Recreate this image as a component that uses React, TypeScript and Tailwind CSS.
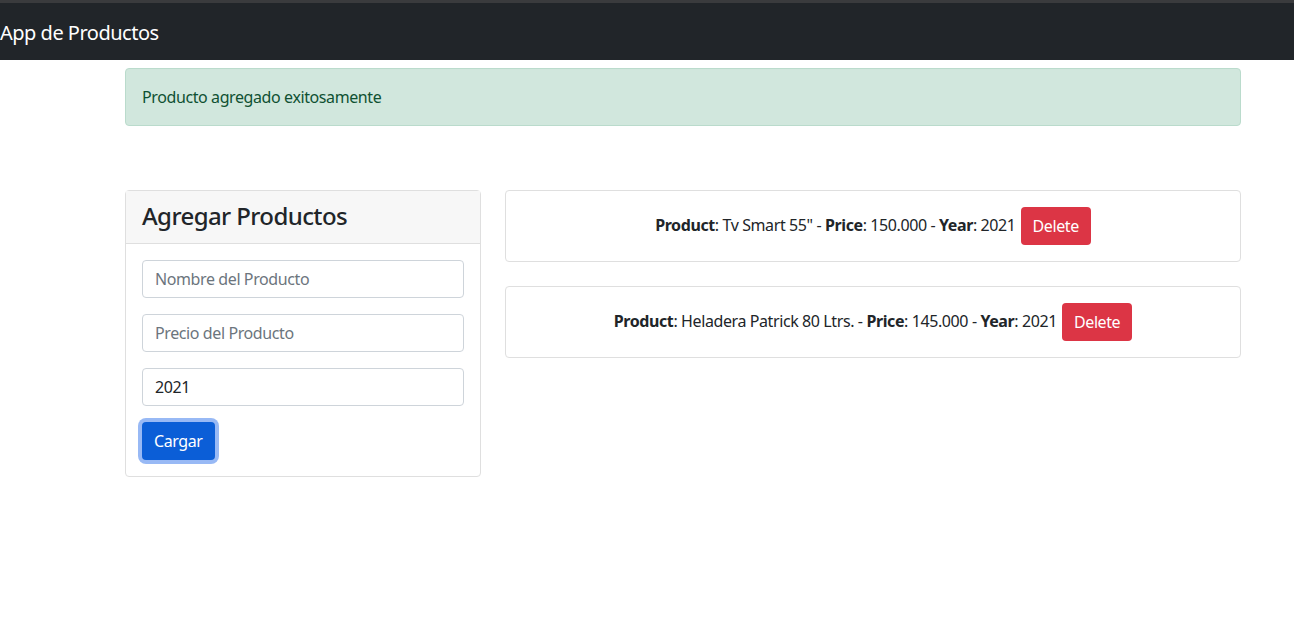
const products = [
  { name: 'Tv Smart 55"', price: "150.000", year: "2021" },
  { name: "Heladera Patrick 80 Ltrs.", price: "145.000", year: "2021" },
];

export default function App() {
  return (
    <div className="min-h-screen bg-white text-[#212529] [font-family:'Segoe_UI','Noto_Sans',sans-serif] text-[16px] tracking-[-0.4px]">
      <div className="h-[3px] bg-[#3a3b3d]" />
      <nav className="h-[57px] bg-[#212529] flex items-center pt-[3px]">
        <span className="text-white text-[20px] leading-none tracking-[-0.5px]">App de Productos</span>
      </nav>

      <div className="ml-[125px] w-[1116px] pt-2">
        <div className="h-[58px] px-4 flex items-center rounded-[4px] border border-[#badbcc] bg-[#d1e7dd] text-[#0f5132]">
          Producto agregado exitosamente
        </div>

        <div className="mt-16 flex gap-6 items-start">
          <div className="w-[356px] rounded-[4px] border border-[#dfdfdf]">
            <div className="h-[53px] px-4 pb-[3px] flex items-center bg-[#f7f7f7] border-b border-[#dfdfdf]">
              <h3 className="text-[24px] font-medium tracking-[-0.6px]">Agregar Productos</h3>
            </div>
            <div className="p-4 flex flex-col gap-4">
              <input
                className="h-[38px] px-3 rounded-[4px] border border-[#ced4da] placeholder:text-[#6c757d] outline-none"
                placeholder="Nombre del Producto"
              />
              <input
                className="h-[38px] px-3 rounded-[4px] border border-[#ced4da] placeholder:text-[#6c757d] outline-none"
                placeholder="Precio del Producto"
              />
              <input
                className="h-[38px] px-3 rounded-[4px] border border-[#ced4da] outline-none"
                defaultValue="2021"
              />
              <div>
                <button className="h-[38px] px-3 rounded-[4px] bg-[#0b5ed7] text-white ring-4 ring-[#98b9f5]">
                  Cargar
                </button>
              </div>
            </div>
          </div>

          <div className="flex-1 flex flex-col gap-6">
            {products.map((p) => (
              <div key={p.name} className="h-[72px] rounded-[4px] border border-[#dfdfdf] flex items-center justify-center gap-[5px]">
                <span className="-mt-[3px]">
                  <b>Product</b>: {p.name} - <b>Price</b>: {p.price} - <b>Year</b>: {p.year}
                </span>
                <button className="h-[38px] px-3 rounded-[4px] bg-[#dc3545] text-white">Delete</button>
              </div>
            ))}
          </div>
        </div>
      </div>
    </div>
  );
}
